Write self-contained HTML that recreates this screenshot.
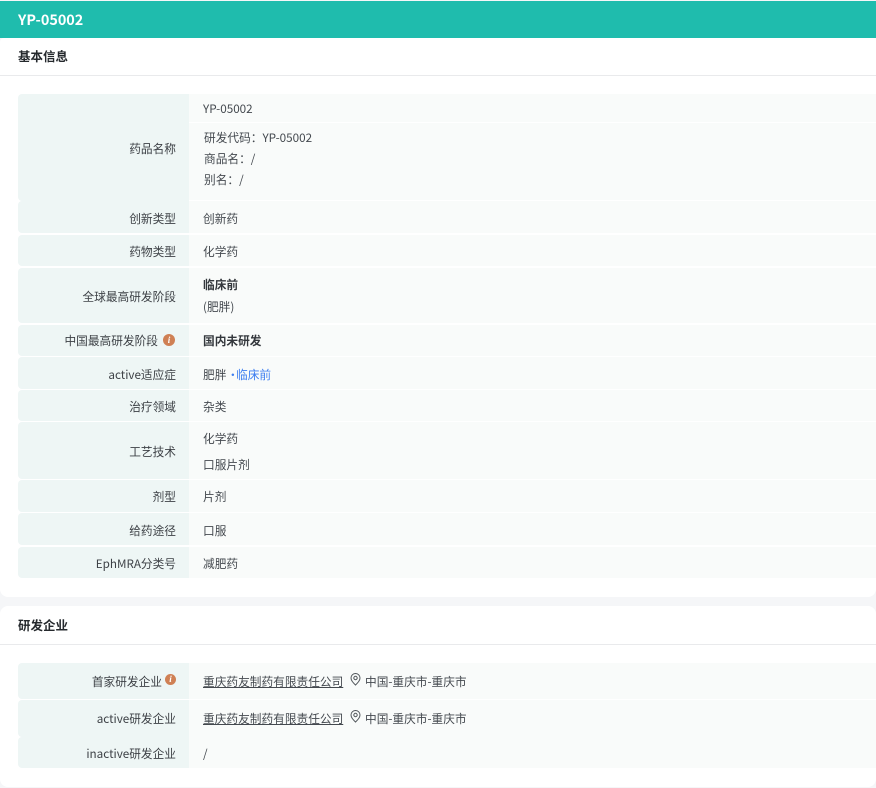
<!DOCTYPE html>
<html><head><meta charset="utf-8">
<style>
html,body{margin:0;padding:0;width:876px;height:788px;overflow:hidden;background:#f5f6f8}
body{position:relative;font-family:"Liberation Sans","Noto Sans CJK SC",sans-serif;font-size:12px;color:#44494f}
*{box-sizing:border-box}
.hd{position:absolute;left:0;top:1px;width:876px;height:37px;background:#1fbcad;color:#fff;font:bold 14.4px/37px "Noto Sans CJK SC",sans-serif;padding-left:18px}
.card{position:absolute;left:0;width:876px;background:#fff;border-radius:8px}
.t{position:absolute;left:18px;font:bold 12.5px/18px "Noto Sans CJK SC",sans-serif;color:#25292d;white-space:nowrap}
.ln{position:absolute;left:0;width:876px;height:1px;background:#e9eaec}
.l{position:absolute;left:18px;width:171px;background:#eef6f5;border-radius:4px 0 0 4px}
.v{position:absolute;left:189px;width:687px;background:#f9fbfa}
.x{position:absolute;white-space:nowrap;font:11.7px/18px "Noto Sans CJK SC",sans-serif}
.r{right:700px;text-align:right;color:#3d4146}
.c{left:203px}
.b{font-weight:bold;color:#33373c}
.i{position:absolute;width:12px;height:12px;border-radius:50%;background:#cf8054;color:#fff;font:italic bold 9px/12px "Liberation Serif",serif;text-align:center}
a{color:inherit;text-decoration:underline}
svg{position:absolute}
</style></head><body>
<div class="hd">YP-05002</div>
<div class="card" style="top:38px;height:559px;border-top-left-radius:4px;border-top-right-radius:0"></div>
<div class="card" style="top:606px;height:181px"></div>
<div class="t" style="top:47px">基本信息</div>
<div class="ln" style="top:75px"></div>
<div class="t" style="top:616px">研发企业</div>
<div class="ln" style="top:644px"></div>

<div class="l" style="top:94px;height:107px"></div><div class="v" style="top:94px;height:28px"></div><div class="v" style="top:123px;height:77px"></div>
<div class="l" style="top:201px;height:32px"></div><div class="v" style="top:201px;height:32px"></div>
<div class="l" style="top:235px;height:31px"></div><div class="v" style="top:235px;height:31px"></div>
<div class="l" style="top:268px;height:55px"></div><div class="v" style="top:268px;height:55px"></div>
<div class="l" style="top:325px;height:31px"></div><div class="v" style="top:325px;height:31px"></div>
<div class="l" style="top:357px;height:32px"></div><div class="v" style="top:357px;height:32px"></div>
<div class="l" style="top:390px;height:31px"></div><div class="v" style="top:390px;height:31px"></div>
<div class="l" style="top:422px;height:57px"></div><div class="v" style="top:422px;height:57px"></div>
<div class="l" style="top:480px;height:32px"></div><div class="v" style="top:480px;height:32px"></div>
<div class="l" style="top:513px;height:32px"></div><div class="v" style="top:513px;height:32px"></div>
<div class="l" style="top:547px;height:31px"></div><div class="v" style="top:547px;height:31px"></div>
<div class="l" style="top:663px;height:36px"></div><div class="v" style="top:663px;height:36px"></div>
<div class="l" style="top:700px;height:37px"></div><div class="v" style="top:700px;height:37px"></div>
<div class="l" style="top:737px;height:31px"></div><div class="v" style="top:737px;height:31px"></div>

<div class="x r" style="top:140px">药品名称</div>
<div class="x c" style="top:100px">YP-05002</div>
<div class="x c" style="top:129px;left:204px">研发代码：YP-05002</div>
<div class="x c" style="top:150px;left:204px">商品名：/</div>
<div class="x c" style="top:171px;left:204px">别名：/</div>
<div class="x r" style="top:210px">创新类型</div><div class="x c" style="top:210px">创新药</div>
<div class="x r" style="top:243px">药物类型</div><div class="x c" style="top:243px">化学药</div>
<div class="x r" style="top:288px">全球最高研发阶段</div>
<div class="x c b" style="top:276px">临床前</div><div class="x c" style="top:298px">(肥胖)</div>
<div class="x r" style="top:332px;right:718px">中国最高研发阶段</div><div class="i" style="left:163px;top:334px">i</div>
<div class="x c b" style="top:332px">国内未研发</div>
<div class="x r" style="top:366px">active适应症</div>
<div class="x c" style="top:366px">肥胖</div><div class="x" style="left:227px;top:366px;color:#3d7ef0">•</div><div class="x" style="left:236px;top:366px;color:#3d7ef0">临床前</div>
<div class="x r" style="top:398px">治疗领域</div><div class="x c" style="top:398px">杂类</div>
<div class="x r" style="top:443px">工艺技术</div><div class="x c" style="top:430px">化学药</div><div class="x c" style="top:456px">口服片剂</div>
<div class="x r" style="top:488px">剂型</div><div class="x c" style="top:488px">片剂</div>
<div class="x r" style="top:522px">给药途径</div><div class="x c" style="top:522px">口服</div>
<div class="x r" style="top:555px">EphMRA分类号</div><div class="x c" style="top:555px">减肥药</div>

<div class="x r" style="top:673px;right:714px">首家研发企业</div><div class="i" style="left:165px;top:674px;width:11px;height:11px;line-height:11px">i</div>
<div class="x c" style="top:673px"><a>重庆药友制药有限责任公司</a></div>
<svg style="left:350px;top:673px" width="11" height="13" viewBox="0 0 11 13" fill="none" stroke="#50555a" stroke-width="1"><path d="M5.5 12C3 9.500 1 7.500 1 5a4.500 4.500 0 0 1 9 0c0 2.500-2 4.500-4.500 7z"/><circle cx="5.500" cy="5" r="1.700"/></svg>
<div class="x" style="left:365px;top:673px">中国-重庆市-重庆市</div>
<div class="x r" style="top:710px">active研发企业</div>
<div class="x c" style="top:710px"><a>重庆药友制药有限责任公司</a></div>
<svg style="left:350px;top:710px" width="11" height="13" viewBox="0 0 11 13" fill="none" stroke="#50555a" stroke-width="1"><path d="M5.5 12C3 9.500 1 7.500 1 5a4.500 4.500 0 0 1 9 0c0 2.500-2 4.500-4.500 7z"/><circle cx="5.500" cy="5" r="1.700"/></svg>
<div class="x" style="left:365px;top:710px">中国-重庆市-重庆市</div>
<div class="x r" style="top:745px">inactive研发企业</div><div class="x c" style="top:745px">/</div>
</body></html>
